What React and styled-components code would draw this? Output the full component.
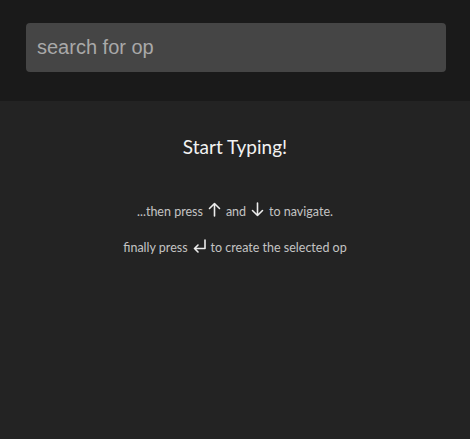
import React from "react";
import styled, { createGlobalStyle } from "styled-components";

const Global = createGlobalStyle`
  html, body {
    margin: 0;
    padding: 0;
    background: #232323;
  }
`;

const Page = styled.div`
  width: 470px;
  height: 439px;
  display: flex;
  flex-direction: column;
  background: #232323;
  font-family: Lato, "Open Sans", sans-serif;
`;

const Header = styled.div`
  height: 101px;
  background: #1a1a1a;
  padding: 23px 24px 0 26px;
  box-sizing: border-box;
`;

const SearchInput = styled.input`
  width: 100%;
  height: 49px;
  box-sizing: border-box;
  border: none;
  outline: none;
  border-radius: 4px;
  background: #454545;
  padding: 0 11px;
  font-family: "Liberation Sans", Arial, sans-serif;
  font-size: 20px;
  color: #ddd;
  &::placeholder {
    color: #a9a9a9;
  }
`;

const Hint = styled.div`
  display: flex;
  flex-direction: column;
  align-items: center;
  padding-top: 34px;
`;

const Title = styled.h2`
  margin: 0 0 43px;
  font-size: 19px;
  font-weight: 400;
  color: #f2f2f2;
  line-height: 24px;
`;

const Line = styled.p`
  margin: 0 0 ${(p) => p.$gap || 0}px;
  font-size: 12.5px;
  color: #c4c4c4;
  line-height: 20px;
  display: flex;
  align-items: center;
`;

const KeyIcon = styled.svg`
  width: 13px;
  height: 15px;
  margin: 0 5px;
  position: relative;
  top: -3px;
  fill: none;
  stroke: #ececec;
  stroke-width: 1.6;
  stroke-linecap: round;
  stroke-linejoin: round;
`;

const Up = () => (
  <KeyIcon viewBox="0 0 13 15">
    <path d="M6.5 14V1.5M1.5 6.5l5-5 5 5" />
  </KeyIcon>
);

const Down = () => (
  <KeyIcon viewBox="0 0 13 15">
    <path d="M6.5 1v12.5M1.5 8.5l5 5 5-5" />
  </KeyIcon>
);

const Enter = () => (
  <KeyIcon viewBox="0 0 13 15">
    <path d="M12 2v8.5H1.5M5 7l-3.5 3.5L5 14" />
  </KeyIcon>
);

export default function App() {
  return (
    <>
      <Global />
      <Page>
        <Header>
          <SearchInput placeholder="search for op" />
        </Header>
        <Hint>
          <Title>Start Typing!</Title>
          <Line $gap={16}>
            <span>...then press</span>
            <Up />
            <span>and</span>
            <Down />
            <span>to navigate.</span>
          </Line>
          <Line>
            <span>finally press</span>
            <Enter />
            <span>to create the selected op</span>
          </Line>
        </Hint>
      </Page>
    </>
  );
}
